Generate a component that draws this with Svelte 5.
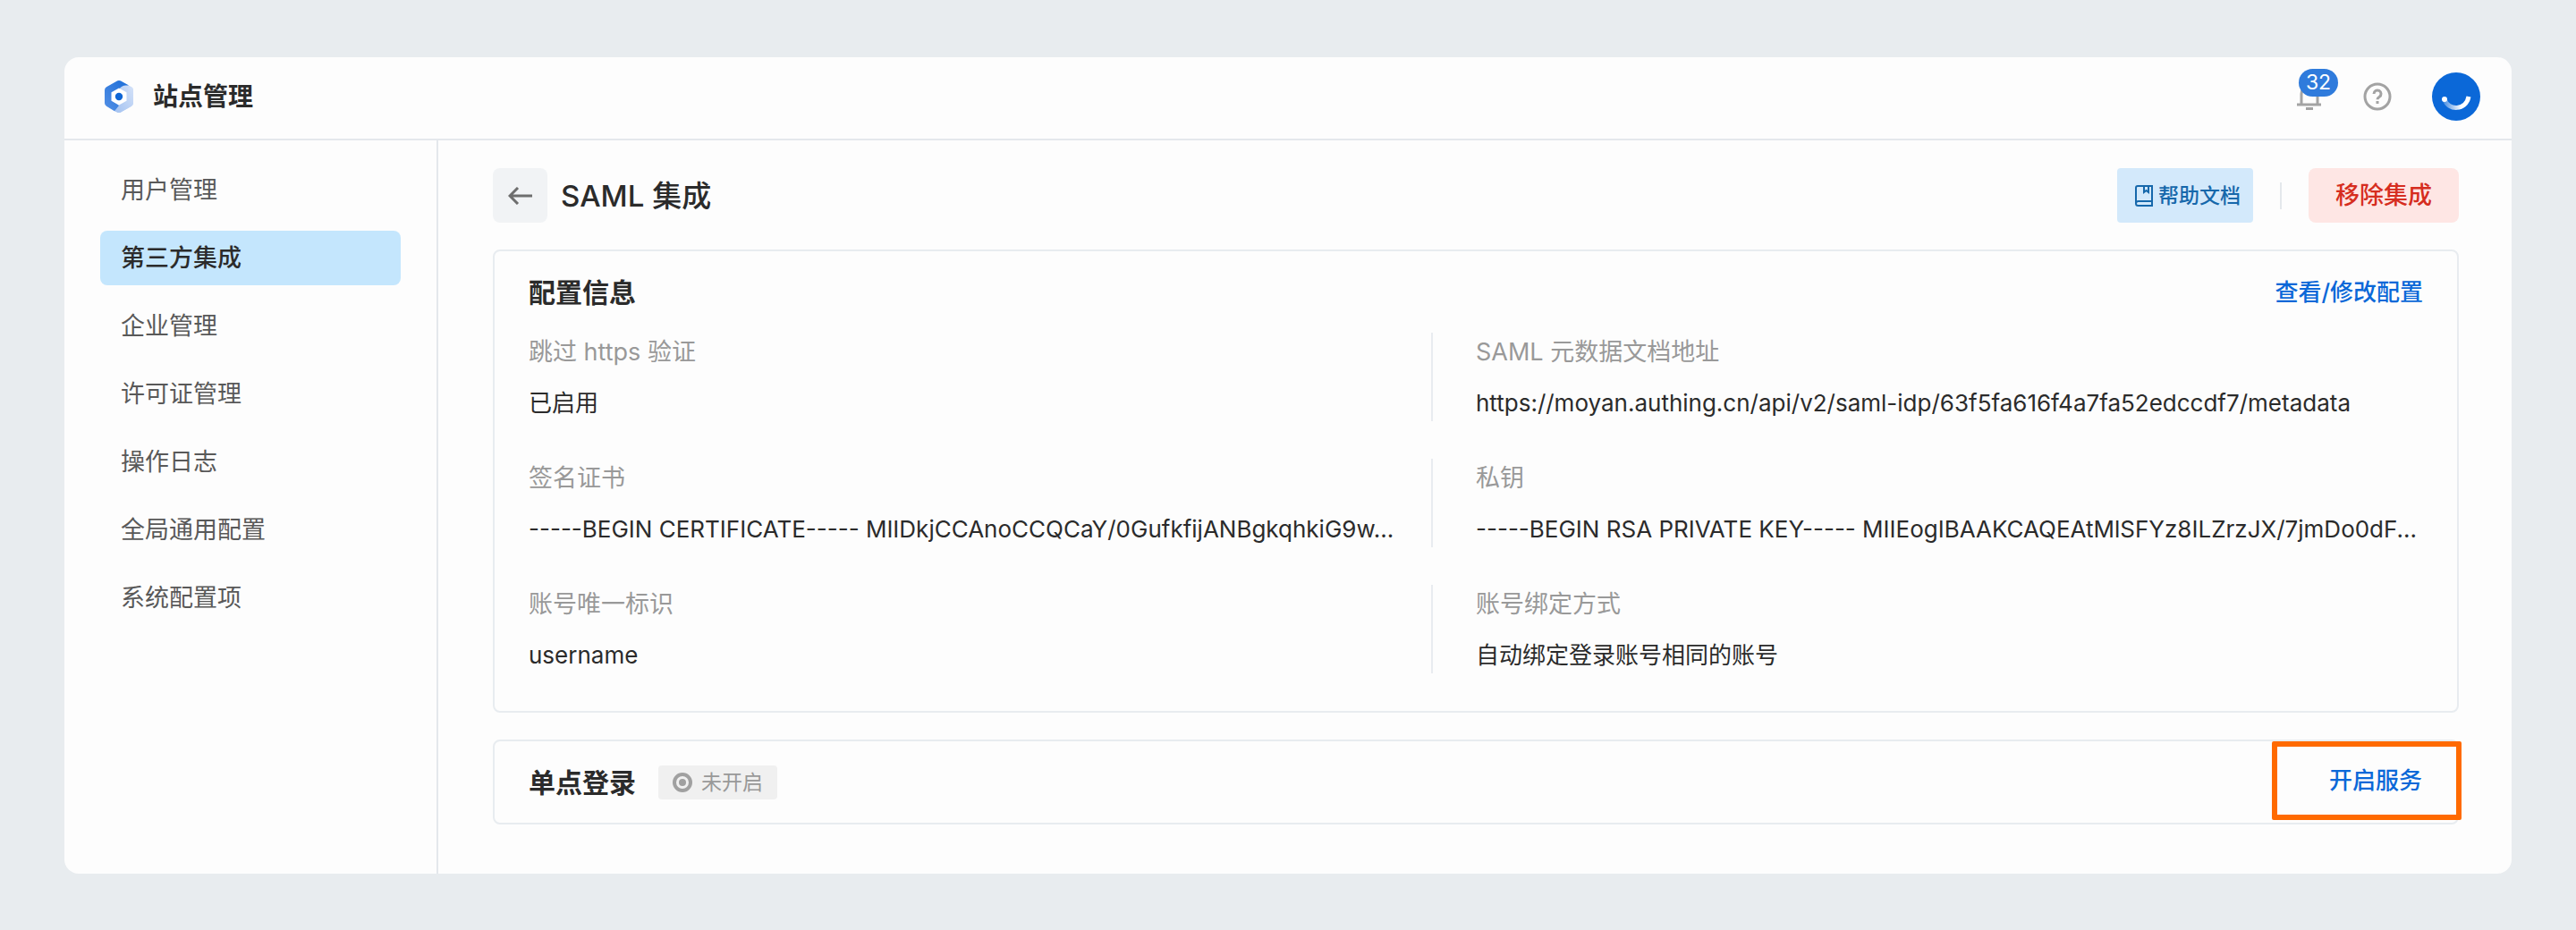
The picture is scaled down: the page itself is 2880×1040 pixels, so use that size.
<script>
  const menu = [
    '用户管理',
    '第三方集成',
    '企业管理',
    '许可证管理',
    '操作日志',
    '全局通用配置',
    '系统配置项',
  ];
  let active = $state('第三方集成');

  const fields = [
    { label: '跳过 https 验证', value: '已启用' },
    {
      label: 'SAML 元数据文档地址',
      value: 'https://moyan.authing.cn/api/v2/saml-idp/63f5fa616f4a7fa52edccdf7/metadata',
    },
    {
      label: '签名证书',
      value: '-----BEGIN CERTIFICATE----- MIIDkjCCAnoCCQCaY/0GufkfijANBgkqhkiG9w...',
    },
    {
      label: '私钥',
      value: '-----BEGIN RSA PRIVATE KEY----- MIIEogIBAAKCAQEAtMlSFYz8ILZrzJX/7jmDo0dF...',
    },
    { label: '账号唯一标识', value: 'username' },
    { label: '账号绑定方式', value: '自动绑定登录账号相同的账号' },
  ];

  function select(e, item) {
    e.preventDefault();
    active = item;
  }
</script>

<div class="window">
  <header class="topbar">
    <svg class="logo" viewBox="0 0 34 38" aria-hidden="true">
      <defs>
        <linearGradient id="logo-dark" x1="1" y1="0" x2="0" y2="1">
          <stop offset="0" stop-color="#1a6dd8" />
          <stop offset="1" stop-color="#5590e5" />
        </linearGradient>
        <linearGradient id="logo-light" x1="0" y1="1" x2="1" y2="0">
          <stop offset="0" stop-color="#a3c2f1" />
          <stop offset="1" stop-color="#d3e1f8" />
        </linearGradient>
      </defs>
      <path
        d="M15 1.6a4 4 0 0 1 4 0l12 6.7a4 4 0 0 1 2 3.5v14.4a4 4 0 0 1-2 3.5l-12 6.700a4 4 0 0 1-4 0l-3-1.700z"
        fill="url(#logo-light)"
      />
      <path
        d="M15 1.6a4 4 0 0 1 4 0l9 5C22 6 18 8 17 12L10 24l7 5-5 6.300L3 29.700a4 4 0 0 1-2-3.500V11.800a4 4 0 0 1 2-3.500z"
        fill="url(#logo-dark)"
      />
      <path d="M12 35.300L24 26l4-17 3-0.700a4 4 0 0 1 2 3.500v14.400a4 4 0 0 1-2 3.500l-12 6.700a4 4 0 0 1-4 0z" fill="url(#logo-light)" />
      <path d="M17 9.500l8.500 4.800v9.400L17 28.500l-8.500-4.800v-9.400z" fill="#fff" />
      <circle cx="17" cy="19" r="4.200" fill="#0f66d6" />
    </svg>
    <h1>站点管理</h1>
    <div class="tools">
      <button class="icon-btn bell" aria-label="通知">
        <svg viewBox="0 0 28 32" fill="none" stroke="#a3a3a3" stroke-width="3" aria-hidden="true">
          <path d="M5 25V13a9 9 0 0 1 18 0v12M0 25h27M10 29.500h8" />
        </svg>
        <span class="count">32</span>
      </button>
      <button class="icon-btn help" aria-label="帮助">
        <svg viewBox="0 0 32 32" fill="none" stroke="#a3a3a3" stroke-width="3" aria-hidden="true">
          <circle cx="16" cy="16" r="14" />
          <path d="M12 13a4 4 0 1 1 6.200 3.300c-1.600 1-2.200 1.400-2.200 3M16 21v3" />
        </svg>
      </button>
      <button class="icon-btn avatar" aria-label="账户">
        <svg viewBox="0 0 54 54" fill="none" aria-hidden="true">
          <defs>
            <linearGradient id="smile" x1="0" y1="0" x2="1" y2="0">
              <stop offset="0" stop-color="#fff" stop-opacity="0.300" />
              <stop offset="0.700" stop-color="#fff" />
            </linearGradient>
          </defs>
          <circle cx="27" cy="27" r="27" fill="#0b68d8" />
          <path d="M14 30C18 43 38 43 41 27" stroke="url(#smile)" stroke-width="5" />
          <circle cx="14" cy="30" r="3" fill="#fff" />
        </svg>
      </button>
    </div>
  </header>

  <div class="body">
    <nav class="sidebar">
      {#each menu as item}
        <a href="#{item}" class:active={item === active} onclick={(e) => select(e, item)}>{item}</a>
      {/each}
    </nav>

    <main>
      <div class="page-head">
        <button class="back" aria-label="返回">
          <svg viewBox="0 0 28 20" fill="none" stroke="#6e6e6e" stroke-width="3" aria-hidden="true">
            <path d="M27 10H2M11 1l-9 9 9 9" />
          </svg>
        </button>
        <h2>SAML 集成</h2>
        <div class="actions">
          <button class="docs">
            <svg viewBox="0 0 20 24" fill="none" stroke="#1668ab" stroke-width="2" aria-hidden="true">
              <path d="M3 1h16v22H3.500A2.500 2.500 0 0 1 1 20.500V3a2 2 0 0 1 2-2zM1 20.500A2.500 2.500 0 0 1 3.500 18H19M10 1v7l2.500-2L15 8V1" />
            </svg>
            帮助文档
          </button>
          <span class="split"></span>
          <button class="remove">移除集成</button>
        </div>
      </div>

      <section class="card config">
        <div class="card-head">
          <h3>配置信息</h3>
          <button class="link">查看/修改配置</button>
        </div>
        <dl>
          {#each fields as field}
            <div class="field">
              <dt>{field.label}</dt>
              <dd>{field.value}</dd>
            </div>
          {/each}
        </dl>
      </section>

      <section class="card sso">
        <h3>单点登录</h3>
        <span class="status">
          <svg viewBox="0 0 22 22" fill="none" aria-hidden="true">
            <circle cx="11" cy="11" r="9" stroke="#a0a0a0" stroke-width="4" />
            <circle cx="11" cy="11" r="4" fill="#a0a0a0" />
          </svg>
          未开启
        </span>
        <button class="link enable">开启服务</button>
      </section>
    </main>
  </div>
</div>

<style>
  :global(body) {
    background: #e8ecef;
  }

  .window {
    display: flex;
    flex-direction: column;
    min-height: calc(100vh - 128px);
    margin: 64px 72px;
    border-radius: 16px;
    background: #fdfdfd;
    color: #2b2b2b;
    font-family: Inter, 'Noto Sans CJK SC', sans-serif;
    font-size: 27px;
    line-height: 40px;
    box-sizing: border-box;
  }

  .window :global(*) {
    box-sizing: border-box;
  }

  h1,
  h2,
  h3,
  dl,
  dd {
    margin: 0;
  }

  button {
    padding: 0;
    border: 0;
    background: none;
    font: inherit;
    cursor: pointer;
  }

  svg {
    display: block;
    flex: none;
  }

  .topbar {
    display: flex;
    align-items: center;
    height: 93px;
    padding: 0 35px 4px 44px;
    border-bottom: 2px solid #e4e8ec;
  }

  .logo {
    width: 34px;
    height: 38px;
  }

  h1 {
    margin-left: 21px;
    font-size: 28px;
    font-weight: 600;
  }

  .tools {
    display: flex;
    align-items: center;
    margin-left: auto;
  }

  .bell {
    position: relative;
    margin-right: 46px;
  }

  .bell svg {
    width: 28px;
    height: 32px;
  }

  .count {
    position: absolute;
    left: 2px;
    top: -15px;
    width: 44px;
    height: 31px;
    border-radius: 16px;
    background: #2f7bdc;
    color: #fff;
    font-size: 23px;
    line-height: 31px;
    text-align: center;
  }

  .help {
    margin-right: 45px;
  }

  .help svg {
    width: 32px;
    height: 32px;
  }

  .avatar svg {
    width: 54px;
    height: 54px;
  }

  .body {
    display: flex;
    flex: 1;
  }

  .sidebar {
    display: flex;
    flex-direction: column;
    gap: 15px;
    flex: none;
    width: 418px;
    padding: 25px 40px;
    border-right: 2px solid #e4e8ec;
  }

  .sidebar a {
    padding: 0 23px;
    border-radius: 8px;
    color: #595959;
    line-height: 61px;
    text-decoration: none;
  }

  .sidebar a.active {
    background: #c4e6fd;
    color: #2b2b2b;
    font-weight: 500;
  }

  main {
    flex: 1;
    min-width: 0;
    padding: 31px 59px 55px 61px;
  }

  .page-head {
    display: flex;
    align-items: center;
    margin-bottom: 30px;
  }

  .back {
    display: flex;
    align-items: center;
    justify-content: center;
    width: 61px;
    height: 61px;
    border-radius: 8px;
    background: #f1f3f5;
  }

  .back svg {
    width: 28px;
    height: 20px;
  }

  h2 {
    margin-left: 15px;
    font-size: 33px;
    font-weight: 500;
  }

  .actions {
    display: flex;
    align-items: center;
    gap: 30px;
    margin-left: auto;
  }

  .docs {
    display: flex;
    align-items: center;
    gap: 6px;
    height: 61px;
    padding: 0 14px 0 20px;
    border-radius: 4px;
    background: #d3e9fb;
    color: #1668ab;
    font-size: 23px;
    font-weight: 500;
  }

  .docs svg {
    width: 20px;
    height: 24px;
  }

  .split {
    width: 2px;
    height: 30px;
    background: #e4e8ec;
  }

  .remove {
    height: 61px;
    padding: 0 30px;
    border-radius: 8px;
    background: #fee6e4;
    color: #d62d20;
    font-weight: 500;
  }

  .card {
    border: 2px solid #e8ecf0;
    border-radius: 8px;
  }

  .config {
    padding: 26px 38px 42px;
  }

  .card-head {
    display: flex;
    align-items: center;
    justify-content: space-between;
    margin-bottom: 25px;
  }

  h3 {
    font-size: 30px;
    font-weight: 600;
  }

  .link {
    color: #0b68d8;
    font-size: 26px;
    font-weight: 500;
  }

  dl {
    display: grid;
    grid-template-columns: 1fr 1fr;
    row-gap: 42px;
  }

  .field {
    min-width: 0;
    height: 99px;
    padding-top: 2px;
  }

  .field:nth-child(odd) {
    margin-right: 48px;
    padding-right: 30px;
    border-right: 2px solid #e8ecf0;
  }

  dt {
    margin-bottom: 17px;
    color: #999;
  }

  dd {
    overflow: hidden;
    font-size: 26px;
    text-overflow: ellipsis;
    white-space: nowrap;
  }

  .sso {
    display: flex;
    align-items: center;
    margin-top: 30px;
    height: 95px;
    padding-left: 38px;
  }

  .status {
    display: flex;
    align-items: center;
    gap: 10px;
    height: 38px;
    margin-left: 25px;
    padding: 0 16px;
    border-radius: 4px;
    background: #f0f0f0;
    color: #999;
    font-size: 23px;
  }

  .status svg {
    width: 22px;
    height: 22px;
  }

  .enable {
    align-self: flex-start;
    height: 88px;
    margin-left: auto;
    margin-right: -5px;
    padding: 0 38px 0 58px;
    border: 6px solid #ff6a00;
    border-radius: 2px;
  }
</style>
